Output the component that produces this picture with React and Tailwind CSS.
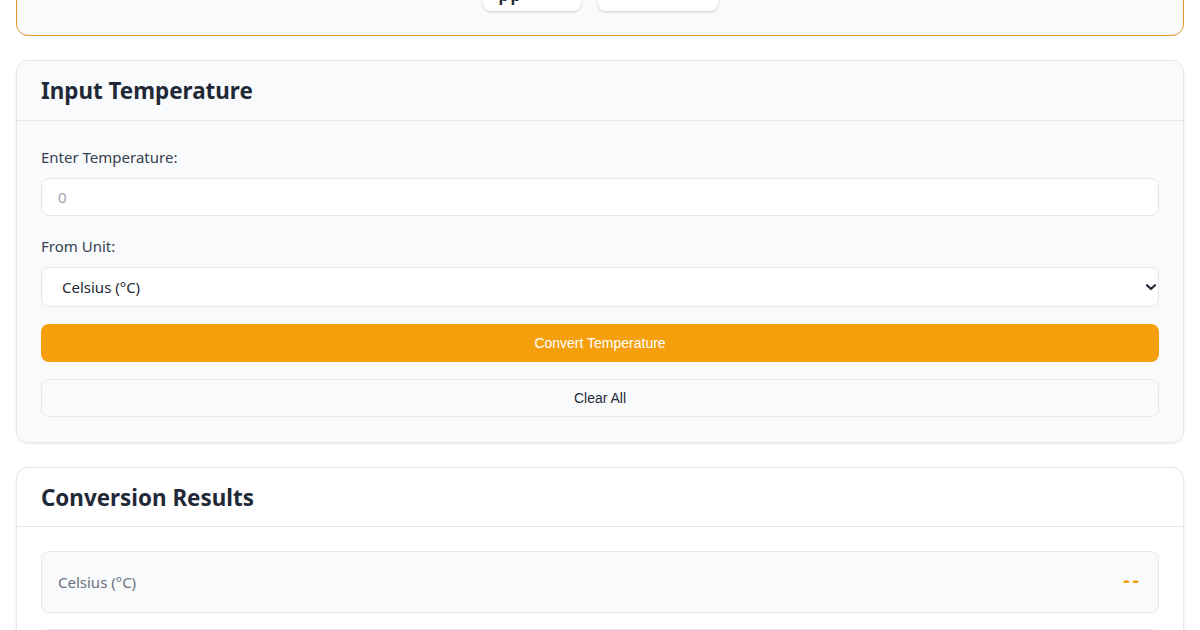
import React from "react";

export default function App() {
  const font = { fontFamily: '"Noto Sans", "Open Sans", sans-serif' };
  const arial = { fontFamily: '"Liberation Sans", Arial, sans-serif' };
  return (
    <div className="min-h-screen bg-white px-4 overflow-hidden" style={font}>
      {/* top card (mostly scrolled off) */}
      <div className="-mt-[30px] h-[66px] rounded-b-xl rounded-t-xl border border-[#e3912b] bg-[#f9fafb] flex justify-center gap-[17px]">
        <div className="h-[40px] w-[98px] rounded-lg bg-white shadow-[0_1px_3px_rgba(0,0,0,0.18)] flex items-end pl-[16px] pb-[8px] text-[#1f2937] text-[16px] leading-none overflow-hidden">
          <span className="font-bold tracking-[2px]">pp</span>
        </div>
        <div className="h-[40px] w-[120px] rounded-lg bg-white shadow-[0_1px_3px_rgba(0,0,0,0.18)]"></div>
      </div>

      {/* Input card */}
      <div className="mt-[24px] rounded-xl border border-[#e5e7eb] bg-[#f9fafb] shadow-[0_1px_3px_rgba(0,0,0,0.08)]">
        <div className="h-[60px] flex items-center px-6 pt-[1px] border-b border-[#e5e7eb]">
          <h2 className="text-[22.4px] font-bold text-[#1f2937]">Input Temperature</h2>
        </div>
        <div className="px-6 pt-[24px] pb-[25px]">
          <label className="block text-[15px] leading-6 text-[#374151] mb-[9px]">Enter Temperature:</label>
          <div className="h-[38px] rounded-lg border border-[#e5e7eb] bg-white flex items-center px-4 text-[15px] text-[#9ca3af]">0</div>
          <label className="block text-[15px] leading-6 text-[#374151] mt-[18px] mb-[9px]">From Unit:</label>
          <div className="relative">
            <select
              className="w-full h-[40px] appearance-none rounded-lg border border-[#e5e7eb] bg-white pl-[20px] pr-8 text-[15px] text-[#1f2937]"
              style={font}
              defaultValue="c"
            >
              <option value="c">Celsius (°C)</option>
              <option value="f">Fahrenheit (°F)</option>
              <option value="k">Kelvin (K)</option>
            </select>
            <svg className="pointer-events-none absolute right-[3px] top-[17px]" width="10" height="7" viewBox="0 0 10 7">
              <path d="M1 1.2 L5 5 L9 1.2" fill="none" stroke="#1f2937" strokeWidth="2.2" strokeLinecap="round" strokeLinejoin="round" />
            </svg>
          </div>
          <button className="mt-[17px] w-full h-[38px] rounded-lg bg-[#f59f0c] text-white text-[14px]" style={arial}>
            Convert Temperature
          </button>
          <button className="mt-[17px] w-full h-[38px] rounded-lg border border-[#e5e7eb] bg-[#f9fafb] text-[#1f2937] text-[14px]" style={arial}>
            Clear All
          </button>
        </div>
      </div>

      {/* Results card */}
      <div className="mt-[24px] rounded-xl border border-[#e5e7eb] bg-white shadow-[0_1px_3px_rgba(0,0,0,0.08)]">
        <div className="h-[59px] flex items-center px-6 pt-[1px] border-b border-[#e5e7eb]">
          <h2 className="text-[22.4px] font-bold text-[#1f2937]">Conversion Results</h2>
        </div>
        <div className="px-6 pt-[24px] pb-[24px] flex flex-col gap-[16px]">
          {["Celsius (°C)", "Fahrenheit (°F)", "Kelvin (K)"].map((u) => (
            <div key={u} className="h-[62px] rounded-lg border border-[#e5e7eb] bg-[#f9fafb] flex items-center justify-between px-4">
              <span className="text-[15px] text-[#6b7280]">{u}</span>
              <span className="text-[20px] font-bold text-[#f59e0b] tracking-[3px] -mt-[5px]">--</span>
            </div>
          ))}
        </div>
      </div>
    </div>
  );
}
